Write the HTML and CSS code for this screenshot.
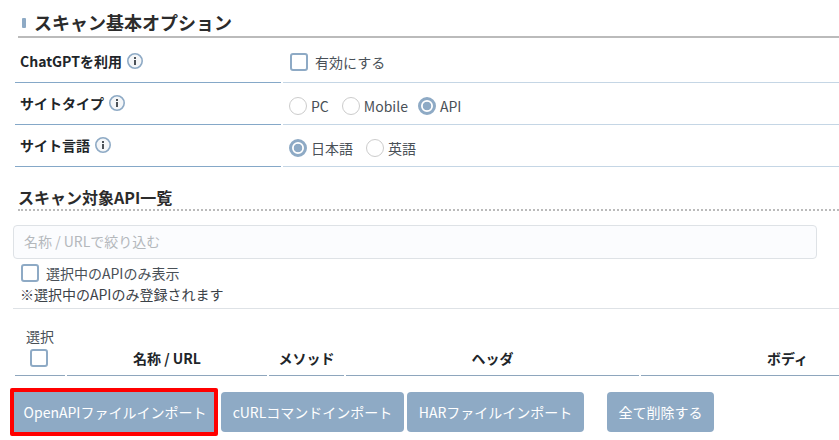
FILE: index.html
```html
<!DOCTYPE html>
<html lang="ja">
<head>
<meta charset="utf-8">
<title>スキャン基本オプション</title>
<link rel="stylesheet" href="styles.css">
</head>
<body>
<h2 class="title"><span class="marker"></span>スキャン基本オプション</h2>
<div class="options">
  <div class="opt-row">
    <div class="opt-label">ChatGPTを利用<svg class="info" viewBox="0 0 16 16"><circle cx="8" cy="8" r="7.2" /><rect x="7" y="7" width="2" height="5" /><rect x="7" y="4" width="2" height="2" /></svg></div>
    <div class="opt-value"><span class="check"></span><span class="check-text">有効にする</span></div>
  </div>
  <div class="opt-row">
    <div class="opt-label">サイトタイプ<svg class="info" viewBox="0 0 16 16"><circle cx="8" cy="8" r="7.2" /><rect x="7" y="7" width="2" height="5" /><rect x="7" y="4" width="2" height="2" /></svg></div>
    <div class="opt-value radios"><span class="radio"></span><span class="radio-text">PC</span><span class="radio"></span><span class="radio-text tight">Mobile</span><span class="radio on"></span><span class="radio-text">API</span></div>
  </div>
  <div class="opt-row">
    <div class="opt-label">サイト言語<svg class="info" viewBox="0 0 16 16"><circle cx="8" cy="8" r="7.2" /><rect x="7" y="7" width="2" height="5" /><rect x="7" y="4" width="2" height="2" /></svg></div>
    <div class="opt-value radios"><span class="radio on"></span><span class="radio-text">日本語</span><span class="radio"></span><span class="radio-text">英語</span></div>
  </div>
</div>
<h3 class="sub">スキャン対象API一覧</h3>
<div class="search">名称 / URLで絞り込む</div>
<div class="only"><span class="check"></span><span class="check-text">選択中のAPIのみ表示</span></div>
<p class="note">※選択中のAPIのみ登録されます</p>
<div class="api-head">
  <div class="col col-sel"><span class="sel-text">選択</span><span class="check"></span></div>
  <div class="col col-name">名称 / URL</div>
  <div class="col col-method">メソッド</div>
  <div class="col col-header">ヘッダ</div>
  <div class="col col-body">ボディ</div>
</div>
<div class="actions">
  <div class="highlight"><button class="btn btn-open">OpenAPIファイルインポート</button></div>
  <button class="btn btn-curl">cURLコマンドインポート</button>
  <button class="btn btn-har">HARファイルインポート</button>
  <button class="btn btn-del">全て削除する</button>
</div>
</body>
</html>
```

FILE: styles.css
```css
* { box-sizing: border-box; }
html, body { margin: 0; padding: 0; }
body {
  width: 839px;
  height: 440px;
  overflow: hidden;
  background: #fff;
  color: #212529;
  font-family: "Noto Sans CJK JP", "Noto Sans", sans-serif;
  font-size: 14px;
}
.title {
  display: flex;
  align-items: center;
  height: 29px;
  margin: 9px 0 0 18px;
  padding-left: 4px;
  border-bottom: 2px solid #bbb;
  font-size: 18px;
  line-height: 27px;
  font-weight: 700;
  color: #2b2b2b;
}
.marker {
  width: 4px;
  height: 10px;
  margin-right: 8px;
  border-radius: 1px;
  background: #8eaac5;
}
.options { margin-top: 3px; padding-left: 15px; }
.opt-row { display: flex; height: 42px; }
.opt-label {
  display: flex;
  align-items: center;
  width: 266px;
  padding: 0 0 1px 5px;
  border-bottom: 1px solid #85a8c8;
  font-size: 14px;
  font-weight: 700;
}
.opt-value {
  display: flex;
  align-items: center;
  flex: 1;
  margin-left: 2px;
  padding: 0 0 0 7px;
  border-bottom: 1px solid #c5d6e5;
  color: #495057;
}
.info { width: 16px; height: 16px; margin-left: 5px; }
.info circle { fill: #f4f6f8; stroke: #8eaac5; stroke-width: 1.6; }
.info rect { fill: #4c5258; }
.check {
  display: inline-block;
  flex: none;
  width: 18px;
  height: 18px;
  border: 2px solid #8eaac5;
  border-radius: 3px;
  background: #fff;
}
.check-text { margin-left: 7px; color: #495057; line-height: 20px; }
.radios { padding-top: 5px; padding-left: 6px; }
.radio {
  flex: none;
  width: 18px;
  height: 18px;
  border: 1px solid #ccc;
  border-radius: 50%;
  background: #fff;
}
.radio.on {
  border: 3px solid #8eaac5;
  background: radial-gradient(circle, #8eaac5 0 4px, #fff 4.6px);
}
.radio-text { margin: 0 13px 0 4px; line-height: 20px; }
.radio-text.tight { margin-right: 10px; }
.sub {
  height: 28px;
  margin: 16px 0 0 18px;
  border-bottom: 2px dotted #bbb;
  font-size: 16px;
  line-height: 28px;
  font-weight: 700;
  color: #2b2b2b;
  white-space: nowrap;
}
.search {
  width: 804px;
  height: 34px;
  margin: 14px 0 0 13px;
  padding-left: 10px;
  border: 1px solid #dee2e6;
  border-radius: 4px;
  background: #fbfcfe;
  color: #b4b8bc;
  font-size: 14px;
  line-height: 31px;
}
.only { display: flex; align-items: center; height: 22px; margin: 3px 0 0 21px; color: #495057; }
.note { margin: 0 0 0 20px; height: 20px; font-size: 14px; line-height: 20px; color: #3c4248; }
.api-head {
  display: flex;
  gap: 2px;
  height: 68px;
  margin: 4px 0 0 13px;
  padding-left: 2px;
  border-top: 1px solid #dee2e6;
}
.col {
  display: flex;
  align-items: flex-end;
  justify-content: center;
  padding-bottom: 7px;
  border-bottom: 1px solid #8ea6bd;
  font-size: 14px;
  font-weight: 700;
  line-height: 20px;
}
.col-sel {
  flex-direction: column;
  align-items: flex-start;
  justify-content: flex-end;
  width: 50px;
  padding: 0 0 8px 11px;
  font-weight: 400;
}
.sel-text { height: 23px; line-height: 20px; color: #495057; }
.col-sel .check { margin-left: 4px; }
.col-name { width: 200px; }
.col-method { width: 75px; }
.col-header { width: 293px; }
.col-body { width: 198px; padding-left: 95px; }
.actions {
  display: flex;
  align-items: center;
  margin: 12px 0 0 10px;
}
.highlight {
  flex: none;
  border: 4px solid #f00;
  border-radius: 2px;
}
.btn {
  display: block;
  flex: none;
  height: 40px;
  padding: 0;
  border: 0;
  border-radius: 4px;
  background: #8eaac5;
  color: #fff;
  font: 400 14px/20px "Noto Sans CJK JP", "Noto Sans", sans-serif;
}
.btn-open { width: 200px; padding-left: 2px; border-radius: 0; }
.btn-curl { width: 183px; margin-left: 3px; }
.btn-har { width: 177px; margin-left: 3px; }
.btn-del { width: 107px; margin-left: 23px; }
```
